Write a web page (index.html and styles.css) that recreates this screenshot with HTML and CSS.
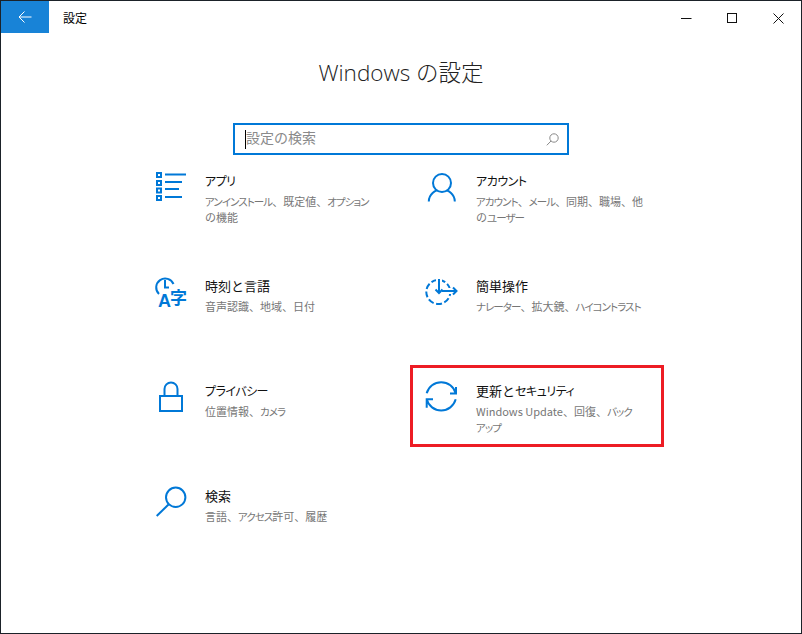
FILE: index.html
```html
<!DOCTYPE html>
<html lang="ja">
<head>
<meta charset="utf-8">
<title>設定</title>
<link rel="stylesheet" href="styles.css">
</head>
<body>
<div class="window">
  <header class="titlebar">
    <button class="back" aria-label="戻る">
      <svg width="14" height="12" viewBox="0 0 14 12"><path d="M6.500.5 1 6l5.500 5.500M1 6h12.500" fill="none" stroke="#fff" stroke-width="1"/></svg>
    </button>
    <span class="app-title">設定</span>
    <div class="controls">
      <span class="ctl"><svg width="11" height="11" viewBox="0 0 11 11"><path d="M0 5.500h10.500" stroke="#111" fill="none"/></svg></span>
      <span class="ctl"><svg width="11" height="11" viewBox="0 0 11 11"><rect x=".5" y=".5" width="9" height="9" stroke="#111" fill="none"/></svg></span>
      <span class="ctl"><svg width="11" height="11" viewBox="0 0 11 11"><path d="M.5.500l10 10M10.500.500l-10 10" stroke="#111" fill="none"/></svg></span>
    </div>
  </header>
  <main class="content">
    <h1 class="heading">Windows の設定</h1>
    <div class="search">
      <span class="caret"></span>
      <span class="placeholder">設定の検索</span>
      <svg class="search-icon" width="13" height="13" viewBox="0 0 13 13"><circle cx="8" cy="5" r="4.200" fill="none" stroke="#8a8a8a"/><path d="M5 8 .8 12.300" stroke="#8a8a8a" fill="none"/></svg>
    </div>
    <section class="grid">
      <a class="item">
        <svg class="icon" width="40" height="40" viewBox="0 0 40 40" fill="none" stroke="#0078d7" stroke-width="2">
          <rect x="3" y="5" width="4" height="4"/><rect x="3" y="13" width="4" height="4"/><rect x="3" y="20.500" width="4" height="4"/><rect x="3" y="28" width="4" height="4"/>
          <path d="M11 6.500h21M11 14h17M11 21h14M11 29h17"/>
        </svg>
        <div class="text"><div class="name"><span class="k">アプリ</span></div><div class="desc"><span class="k">アンインストール</span>、既定値、<span class="k">オプション</span><br>の機能</div></div>
      </a>
      <a class="item">
        <svg class="icon" width="40" height="40" viewBox="0 0 40 40" fill="none" stroke="#0078d7" stroke-width="2">
          <path d="M3.800 33.500a13 12 0 0 1 26 0"/><circle cx="17" cy="15" r="9" fill="#fff"/>
        </svg>
        <div class="text"><div class="name"><span class="k">アカウント</span></div><div class="desc"><span class="k">アカウント</span>、<span class="k">メール</span>、同期、職場、他<br>の<span class="k">ユーザー</span></div></div>
      </a>
      <a class="item">
        <svg class="icon" width="40" height="40" viewBox="0 0 40 40" fill="none" stroke="#0078d7" stroke-width="2">
          <path d="M5 21A9 9 0 1 1 19.500 11"/><path d="M11 7v7.500h4"/>
          <text class="ico-a" x="4" y="34">A</text><text class="ico-zi" x="16" y="31">字</text>
        </svg>
        <div class="text"><div class="name">時刻と言語</div><div class="desc">音声認識、地域、日付</div></div>
      </a>
      <a class="item">
        <svg class="icon" width="40" height="40" viewBox="0 0 40 40" fill="none" stroke="#0078d7" stroke-width="2">
          <circle cx="13.300" cy="19" r="12" stroke-dasharray="6 2.500" stroke-dashoffset="2"/>
          <path d="M14 6v14M17 18h14" stroke="#fff" stroke-width="6"/>
          <path d="M14 6v14M10.500 16.500 14 20l3.500-3.500M17 18h14M28 14.500l3.500 3.500-3.500 3.500"/>
        </svg>
        <div class="text"><div class="name">簡単操作</div><div class="desc"><span class="k">ナレーター</span>、拡大鏡、<span class="k">ハイコントラスト</span></div></div>
      </a>
      <a class="item">
        <svg class="icon" width="40" height="40" viewBox="0 0 40 40" fill="none" stroke="#0078d7" stroke-width="2">
          <rect x="6" y="18" width="22" height="15"/><path d="M10.500 18V11a6.500 6.500 0 0 1 13 0v7"/>
        </svg>
        <div class="text"><div class="name"><span class="k">プライバシー</span></div><div class="desc">位置情報、<span class="k">カメラ</span></div></div>
      </a>
      <a class="item item-marked">
        <svg class="icon" width="40" height="40" viewBox="0 0 40 40" fill="none" stroke="#0078d7" stroke-width="2">
          <path d="M1.700 15.300A15 15 0 0 1 30.700 15.300M31 9v6.500h-6M30.700 21.300A15 15 0 0 1 1.700 21.300M1.700 29.700V21.300H8"/>
        </svg>
        <div class="text"><div class="name">更新と<span class="k">セキュリティ</span></div><div class="desc">Windows Update、回復、<span class="k">バック</span><br><span class="k">アップ</span></div></div>
      </a>
      <a class="item">
        <svg class="icon" width="40" height="40" viewBox="0 0 40 40" fill="none" stroke="#0078d7" stroke-width="2">
          <circle cx="21.700" cy="14.300" r="9.700"/><path d="M14.500 21.500 2.700 33"/>
        </svg>
        <div class="text"><div class="name">検索</div><div class="desc">言語、<span class="k">アクセス</span>許可、履歴</div></div>
      </a>
    </section>
  </main>
</div>
</body>
</html>
```
FILE: styles.css
```css
* { box-sizing: border-box; }
html, body { margin: 0; padding: 0; background: #fff; }
body {
  font-family: "Noto Sans CJK JP", "Noto Sans", sans-serif;
  color: #000;
}
.window {
  width: 802px;
  height: 634px;
  border: 1px solid #1b2229;
  background: #fff;
  overflow: hidden;
}
.titlebar {
  display: flex;
  align-items: center;
  height: 32px;
}
.back {
  width: 48px;
  height: 32px;
  border: 0;
  padding: 0;
  background: #1883d7;
  display: flex;
  align-items: center;
  justify-content: center;
}
.app-title {
  margin-left: 14px;
  font-size: 12px;
  line-height: 16px;
  padding-top: 2px;
}
.controls {
  margin-left: auto;
  display: flex;
}
.ctl {
  width: 46px;
  height: 32px;
  display: flex;
  align-items: center;
  justify-content: center;
}
.ctl svg { margin-bottom: -2px; }
.content {
  display: flex;
  flex-direction: column;
  align-items: center;
}
.heading {
  margin: 24px 0 0;
  font-family: "Open Sans", "Noto Sans CJK JP", sans-serif;
  font-weight: 300;
  font-size: 22.500px;
  line-height: 32px;
  color: #222;
}
.search {
  margin-top: 34px;
  width: 336px;
  height: 32px;
  border: 2px solid #0078d7;
  display: flex;
  align-items: center;
  padding: 0 8px 0 10px;
}
.caret {
  width: 1px;
  height: 19px;
  background: #000;
}
.placeholder {
  font-size: 14px;
  color: #8a8a8a;
  line-height: 20px;
  flex: 1;
  padding-bottom: 4px;
}
.grid {
  margin-top: 13px;
  align-self: flex-start;
  margin-left: 153px;
  display: grid;
  grid-template-columns: 271px 271px;
  grid-auto-rows: 105px;
}
.item {
  position: relative;
  display: flex;
  align-items: flex-start;
  gap: 11px;
}
.icon { flex: none; }
.text { padding-top: 3px; }
.name {
  font-size: 13px;
  line-height: 20px;
  color: #111;
  white-space: nowrap;
}
.name .k { font-size: 12px; letter-spacing: -.5px; }
.desc {
  margin-top: 3px;
  font-size: 11px;
  line-height: 15.500px;
  color: #767676;
  white-space: nowrap;
}
.desc .k { font-size: 10.500px; letter-spacing: -.95px; }
.k { font-feature-settings: "palt"; }
.ico-a, .ico-zi { fill: #0078d7; stroke: none; font-weight: 700; }
.ico-a { font-family: "Liberation Sans", sans-serif; font-size: 18px; }
.ico-zi { font-family: "Noto Sans CJK JP", sans-serif; font-size: 17px; }
.item-marked::after {
  content: "";
  box-sizing: border-box;
  position: absolute;
  left: -15px;
  top: -13px;
  width: 254px;
  height: 82px;
  border: 3px solid #ed1c24;
}
```
